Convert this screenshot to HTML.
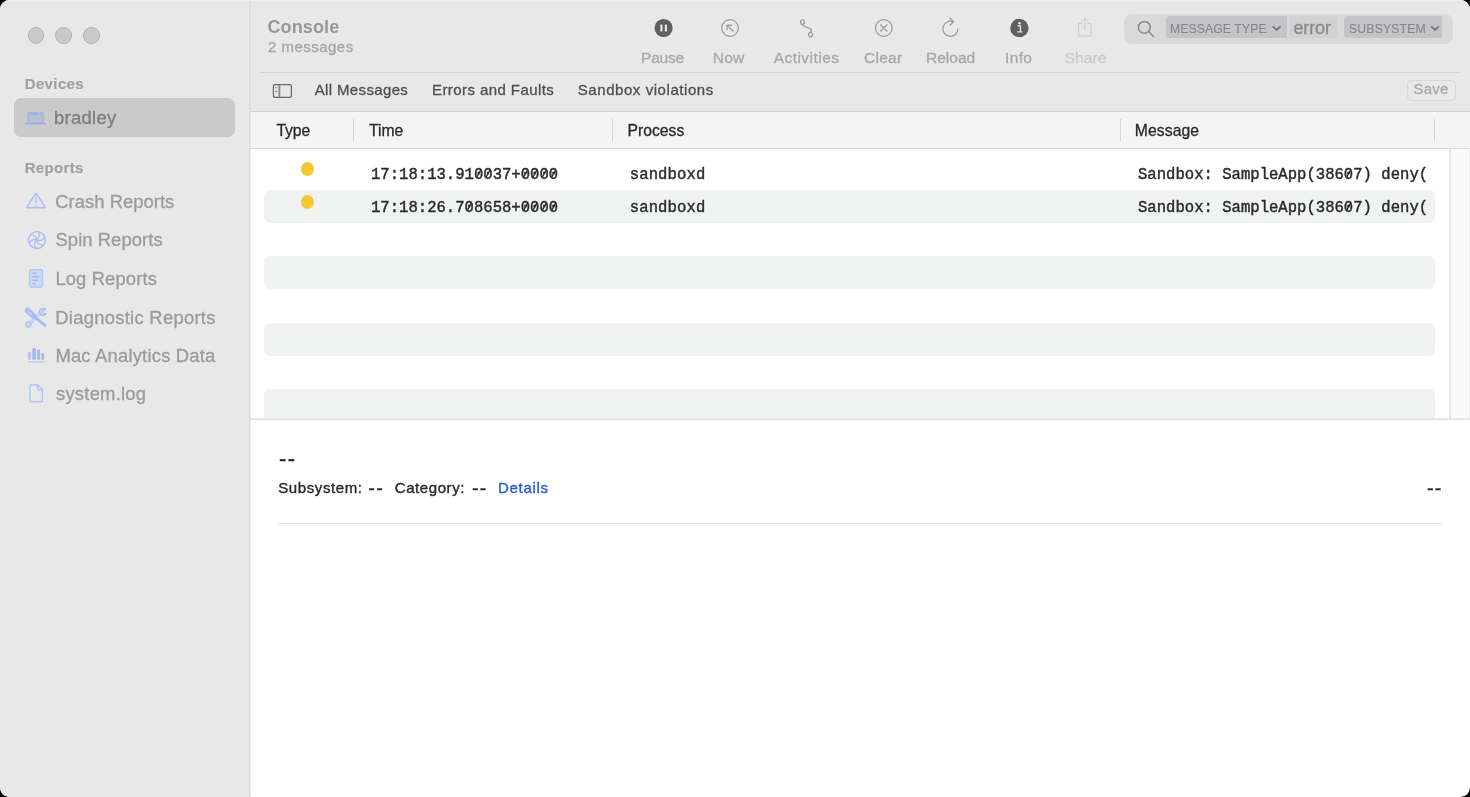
<!DOCTYPE html>
<html>
<head>
<meta charset="utf-8">
<title>Console</title>
<style>
*{box-sizing:border-box;margin:0;padding:0}
html,body{width:1470px;height:797px;overflow:hidden;background:#000;font-family:"Liberation Sans",sans-serif;}
#win{position:absolute;left:0;top:0;width:1470px;height:797px;border-radius:9.5px;overflow:hidden;background:#fff;will-change:transform;}
.abs{position:absolute}
.t{position:absolute;white-space:nowrap;line-height:1;transform-origin:0 50%;-webkit-text-stroke:.3px currentColor;}
/* sidebar */
#side{position:absolute;left:0;top:0;width:250px;height:797px;background:#e8e8e8;}
#sdiv{position:absolute;left:249px;top:0;width:2px;height:797px;background:linear-gradient(to right,#dbdbdb 50%,rgba(219,219,219,.45) 50%);}
#hl{position:absolute;left:0;top:0;width:1470px;height:1.2px;background:#eeeeee;}
.tl{position:absolute;top:27.4px;width:16.4px;height:16.4px;border-radius:50%;background:#c9c9c9;border:1.1px solid #b3b3b3;}
.sh{font-weight:bold;font-size:15px;color:#a1a1a1;-webkit-text-stroke:.15px currentColor;}
.si{font-size:18.4px;color:#9b9b9b;}
#sel{position:absolute;left:14px;top:98.2px;width:221.2px;height:38.4px;border-radius:7px;background:#cacaca;}
/* toolbar */
#tb{position:absolute;left:250px;top:0;width:1220px;height:111px;background:#e8e8e8;}
.lbl{font-size:15.5px;color:#a8a8a8;}
.flt{font-size:15px;color:#4f4f4f;}
/* table */
#hdr{position:absolute;left:250px;top:111px;width:1220px;height:38px;background:#f4f4f4;border-top:1px solid #d2d2d2;border-bottom:1px solid #d9d9d9;}
.hc{font-size:15.7px;color:#2a2a2a;}
.hs{position:absolute;top:119.2px;width:1px;height:21.6px;background:#d3d3d3;}
.row{position:absolute;left:264.3px;width:1170.5px;height:32.9px;border-radius:6px;background:#f1f3f3;}
.mono{font-family:"Liberation Mono",monospace;font-size:15.6px;color:#2b2b2b;-webkit-text-stroke:.42px currentColor;}
.tok{font-size:13.2px;color:#86868b;-webkit-text-stroke:.1px currentColor;transform:scaleX(.93);}
.dt{font-size:15px;color:#2a2a2a;-webkit-text-stroke:.38px currentColor;}
.dash{font-size:20px;color:#2a2a2a;letter-spacing:1.2px}
.dot{position:absolute;width:13.2px;height:13.2px;border-radius:50%;background:#f4c931;}
</style>
</head>
<body>
<div id="win">

<!-- SIDEBAR -->
<div id="side"></div>
<div class="tl" style="left:27.7px"></div>
<div class="tl" style="left:55.4px"></div>
<div class="tl" style="left:83.2px"></div>
<div class="t sh" style="left:24.7px;top:75.7px;letter-spacing:.38px">Devices</div>
<div id="sel"></div>
<div class="t si" style="left:54px;top:109px;color:#7d7d7d;letter-spacing:.3px">bradley</div>
<div class="t sh" style="left:24.7px;top:160.4px;letter-spacing:.33px">Reports</div>
<div class="t si" style="left:55.3px;top:193px;letter-spacing:.03px">Crash Reports</div>
<div class="t si" style="left:55.5px;top:231.3px;letter-spacing:.07px">Spin Reports</div>
<div class="t si" style="left:55.4px;top:270px;letter-spacing:.13px">Log Reports</div>
<div class="t si" style="left:55.3px;top:308.8px;letter-spacing:.28px">Diagnostic Reports</div>
<div class="t si" style="left:55.4px;top:346.8px;letter-spacing:.21px">Mac Analytics Data</div>
<div class="t si" style="left:56px;top:385px;letter-spacing:.24px">system.log</div>

<!-- sidebar icons -->
<svg class="abs" style="left:0;top:100px" width="250" height="320" viewBox="0 100 250 320" fill="none" stroke-linecap="round" stroke-linejoin="round">
 <!-- laptop -->
 <rect x="27.2" y="112" width="16.7" height="11" rx="1.6" fill="#a7b6de"/>
 <rect x="29.1" y="114.9" width="12.3" height="7.2" fill="#b7bfd6"/>
 <rect x="32.9" y="112.8" width="3.9" height="1.7" rx=".5" fill="#97abe0"/>
 <rect x="24.9" y="122.5" width="21.2" height="2.1" rx="1" fill="#9db1e3"/>
 <g stroke="#a6bcf4" stroke-width="1.4">
  <!-- crash: warning triangle -->
  <path d="M36 193.3 L45.5 207.6 H26.6 Z" stroke="#abc0f5" stroke-width="1.7"/>
  <path d="M36 197.6 V203 M36 205.3 V205.5" stroke="#abc0f5" stroke-width="1.35"/>
  <!-- spin -->
  <circle cx="36.95" cy="240.05" r="8.4"/>
  <g transform="translate(36.95 240.05)" stroke-width="1.2">
   <path d="M0 0 Q3.9 -3.4 1.4 -8.2"/>
   <path d="M0 0 Q3.9 -3.4 1.4 -8.2" transform="rotate(60)"/>
   <path d="M0 0 Q3.9 -3.4 1.4 -8.2" transform="rotate(120)"/>
   <path d="M0 0 Q3.9 -3.4 1.4 -8.2" transform="rotate(180)"/>
   <path d="M0 0 Q3.9 -3.4 1.4 -8.2" transform="rotate(240)"/>
   <path d="M0 0 Q3.9 -3.4 1.4 -8.2" transform="rotate(300)"/>
   <circle r="1.3" fill="#a6bcf4" stroke="none"/>
  </g>
  <!-- log doc -->
  <rect x="29.7" y="269.7" width="12.7" height="17.3" rx="2" fill="#cfdaf5" stroke="#b3c6f4" stroke-width="1.5"/>
  <path d="M32.4 273.3 H36.4 M32.4 276.8 H39.3 M32.4 280.3 H38 M32.4 283.8 H35.4" stroke="#a0b8f5" stroke-width="1.5" stroke-linecap="butt"/>
  <!-- diagnostic: wrench + screwdriver -->
  <path d="M29.4 323.6 L41 312.4" stroke="#bccdf6" stroke-width="3.4"/>
  <path d="M29.4 323.6 L41 312.4" stroke="#e1e5ef" stroke-width="1.2"/>
  <path d="M45.6 309.2 A3.7 3.7 0 1 0 46.4 313.6 L43.2 313.2 L42.6 310.8 Z" fill="#c3d2f6" stroke="#aac0f5" stroke-width="1.2"/>
  <circle cx="28.4" cy="324.4" r="2.7" fill="#c9d6f6" stroke="#b0c4f5" stroke-width="1.2"/>
  <path d="M27.6 310.4 L34 316.5" stroke="#a9bff4" stroke-width="5.8"/>
  <path d="M28.6 311.4 L32 314.6" stroke="#bdcdf5" stroke-width="2.6" stroke-linecap="butt"/>
  <path d="M34 316.5 L44.9 325.3" stroke="#a2baf5" stroke-width="2.7"/>
 </g>
 <!-- analytics bars -->
 <g fill="#a3baf5">
  <rect x="28.4" y="351.9" width="2.1" height="7.8" rx=".6"/>
  <rect x="32.3" y="348" width="3.6" height="11.7" rx=".8"/>
  <rect x="37.1" y="349.5" width="3" height="10.2" rx=".7"/>
  <rect x="41.3" y="352.9" width="2.8" height="6.8" rx=".6"/>
  <rect x="28" y="361.2" width="16.4" height="1.4" rx=".5" fill="#b3c6f5"/>
 </g>
 <!-- system.log doc -->
 <path d="M31.7 384.8 H37.6 L42.4 389.6 V399.9 Q42.4 401.7 40.6 401.7 H31.7 Q29.9 401.7 29.9 399.9 V386.6 Q29.9 384.8 31.7 384.8 Z M37.4 385 V388.2 Q37.4 389.8 39 389.8 H42.2" stroke="#b0c5f5" stroke-width="1.4"/>
</svg>

<!-- TOOLBAR -->
<div id="tb"></div>
<div class="t" style="left:267.5px;top:18px;font-weight:bold;font-size:18px;color:#989898;letter-spacing:.12px;-webkit-text-stroke:0">Console</div>
<div class="t" style="left:268px;top:38.5px;font-size:15px;color:#a6a6a6;letter-spacing:.48px">2 messages</div>
<div class="t lbl" style="left:641px;top:50.3px;letter-spacing:-.2px">Pause</div>
<div class="t lbl" style="left:712.8px;top:50.3px;letter-spacing:.25px">Now</div>
<div class="t lbl" style="left:773.7px;top:50.3px;letter-spacing:.46px">Activities</div>
<div class="t lbl" style="left:864px;top:50.3px;letter-spacing:.28px">Clear</div>
<div class="t lbl" style="left:926px;top:50.3px">Reload</div>
<div class="t lbl" style="left:1005px;top:50.3px;letter-spacing:.37px">Info</div>
<div class="t lbl" style="left:1064.5px;top:50.3px;color:#cbcbcb;letter-spacing:.12px">Share</div>
<div class="abs" style="left:260px;top:72px;width:1199px;height:1px;background:#d5d5d5"></div>
<div class="t flt" style="left:314.7px;top:82px;letter-spacing:.36px">All Messages</div>
<div class="t flt" style="left:432px;top:82px;letter-spacing:.42px">Errors and Faults</div>
<div class="t flt" style="left:577.8px;top:82px;letter-spacing:.56px">Sandbox violations</div>

<!-- search field -->
<div class="abs" style="left:1124px;top:14px;width:329px;height:30px;border-radius:8px;background:#d9d9d9"></div>
<div class="abs" style="left:1166px;top:16.4px;width:120.5px;height:22px;border-radius:4px 0 0 4px;background:#c3c3c8"></div>
<div class="abs" style="left:1289px;top:16.4px;width:48px;height:22px;border-radius:0 4px 4px 0;background:#d1d1d4"></div>
<div class="abs" style="left:1344px;top:16.4px;width:98px;height:22px;border-radius:4px 0 0 4px;background:#c3c3c8"></div>
<div class="t tok" style="left:1170.3px;top:21.7px;letter-spacing:.07px">MESSAGE TYPE</div>
<div class="t" style="left:1293.4px;top:19.2px;font-size:18px;color:#8a8a8a;letter-spacing:-.1px">error</div>
<div class="t tok" style="left:1348.6px;top:21.7px;letter-spacing:.15px">SUBSYSTEM</div>
<!-- save button -->
<div class="abs" style="left:1406.5px;top:80px;width:49px;height:21px;border-radius:4.5px;border:1px solid #d8d8d8;background:#e9e9e9"></div>
<div class="t" style="left:1413.6px;top:81px;font-size:15px;color:#aaa;letter-spacing:.2px">Save</div>

<!-- toolbar icons -->
<svg class="abs" style="left:0;top:0" width="1470" height="112" viewBox="0 0 1470 112" fill="none" stroke-linecap="round" stroke-linejoin="round">
 <!-- pause -->
 <circle cx="663.6" cy="28" r="9.1" fill="#5f5f5f"/>
 <rect x="660.3" y="24.6" width="2.2" height="6.9" rx=".5" fill="#e6e6e6"/>
 <rect x="664.8" y="24.6" width="2.2" height="6.9" rx=".5" fill="#e6e6e6"/>
 <!-- now -->
 <g stroke="#9a9a9a" stroke-width="1.25">
  <circle cx="730" cy="28" r="8.3"/>
  <path d="M733.3 31.3 L727.1 25.1 M727.1 29.7 V25.1 H731.7"/>
 <!-- activities -->
  <ellipse cx="802.5" cy="22.1" rx="1.9" ry="2.4" transform="rotate(-12 802.5 22.1)"/>
  <path d="M803 24.6 C803.6 27 805.8 27.2 807.8 27.6 C810.6 28.1 811.9 29.6 811.1 32.1"/>
  <ellipse cx="810.5" cy="34.6" rx="1.9" ry="2.4" transform="rotate(-12 810.5 34.6)"/>
 <!-- clear -->
  <circle cx="883.8" cy="28" r="8.3"/>
  <path d="M880.6 24.8 L887 31.2 M887 24.8 L880.6 31.2"/>
 <!-- reload -->
  <path d="M952.9 21.7 A7.5 7.5 0 1 0 957.9 28.9"/>
  <path d="M949.9 18.2 L953.7 21.6 L950.3 25"/>
 </g>
 <!-- info -->
 <circle cx="1019.4" cy="27.9" r="9.2" fill="#606060"/>
 <circle cx="1019.5" cy="23.3" r="1.25" fill="#e8e8e8"/>
 <path d="M1017.5 25.9 H1020.4 V31.7 M1017.2 31.9 H1022.4" stroke="#e8e8e8" stroke-width="1.3" stroke-linecap="butt" stroke-linejoin="miter"/>
 <!-- share -->
 <g stroke="#d0d0d0" stroke-width="1.2">
  <path d="M1082 23.4 H1079.6 Q1078.6 23.4 1078.6 24.4 V35.2 Q1078.6 36.2 1079.6 36.2 H1090 Q1091 36.2 1091 35.2 V24.4 Q1091 23.4 1090 23.4 H1087.6"/>
  <path d="M1084.8 30 V18.4 M1081.8 21.2 L1084.8 18.2 L1087.8 21.2"/>
 </g>
 <!-- search glass -->
 <g stroke="#8a8a8a" stroke-width="1.45">
  <circle cx="1144.3" cy="27.3" r="5.9"/>
  <path d="M1148.6 31.6 L1153.4 36.4"/>
 </g>
 <!-- token chevrons -->
 <g stroke="#707070" stroke-width="1.7">
  <path d="M1273.4 26.8 L1276.7 29.8 L1280 26.8"/>
  <path d="M1431.6 26.8 L1434.9 29.8 L1438.2 26.8"/>
 </g>
 <!-- sidebar toggle -->
 <g stroke="#666" stroke-width="1.2">
  <rect x="273.4" y="84.6" width="18" height="12.8" rx="1.9"/>
  <path d="M279.4 84.8 V97.2" stroke="#8a8a8a" stroke-width="1.9" stroke-linecap="butt"/>
  <path d="M275.5 87.8 H277 M275.5 91.4 H277" stroke="#8a8a8a" stroke-width="1.1"/>
 </g>
</svg>

<!-- TABLE HEADER -->
<div id="hdr"></div>
<div class="t hc" style="left:276.4px;top:123.4px;letter-spacing:-.1px">Type</div>
<div class="t hc" style="left:369px;top:123.4px;letter-spacing:-.02px">Time</div>
<div class="t hc" style="left:627.6px;top:123.4px;letter-spacing:0px">Process</div>
<div class="t hc" style="left:1134.8px;top:123.4px;letter-spacing:.1px">Message</div>
<div class="hs" style="left:353px"></div>
<div class="hs" style="left:612px"></div>
<div class="hs" style="left:1120px"></div>
<div class="hs" style="left:1434.2px"></div>

<!-- ROWS -->
<div class="row" style="top:190.1px"></div>
<div class="row" style="top:256.3px"></div>
<div class="row" style="top:322.8px"></div>
<div class="row" style="top:389.2px;height:30px;border-bottom-left-radius:0;border-bottom-right-radius:0"></div>
<div class="dot" style="left:300.8px;top:162.4px"></div>
<div class="dot" style="left:300.8px;top:195.4px"></div>
<div class="t mono" style="left:371px;top:168px">17:18:13.910037+0000</div>
<div class="t mono" style="left:371px;top:201.2px">17:18:26.708658+0000</div>
<div class="t mono" style="letter-spacing:.12px;left:629.7px;top:168px">sandboxd</div>
<div class="t mono" style="letter-spacing:.12px;left:629.7px;top:201.2px">sandboxd</div>
<div class="t mono" style="left:1138px;top:168px">Sandbox: SampleApp(38607) deny(</div>
<div class="t mono" style="left:1138px;top:201.2px">Sandbox: SampleApp(38607) deny(</div>
<!-- slashed zeros -->
<svg class="abs" style="left:0;top:150px" width="1470" height="80" viewBox="0 150 1470 80"><path d="M476.8 177.2 L480.6 170.2 M486.1 177.2 L489.9 170.2 M523.6 177.2 L527.4 170.2 M532.9 177.2 L536.7 170.2 M542.3 177.2 L546.1 170.2 M551.7 177.2 L555.5 170.2 M1346.7 177.2 L1350.5 170.2 M467.4 210.4 L471.2 203.4 M523.6 210.4 L527.4 203.4 M532.9 210.4 L536.7 203.4 M542.3 210.4 L546.1 203.4 M551.7 210.4 L555.5 203.4 M1346.7 210.4 L1350.5 203.4" stroke="#2b2b2b" stroke-width="1.35" stroke-linecap="round" fill="none"/></svg>
<!-- scrollbar track -->
<div class="abs" style="left:1449px;top:149px;width:21px;height:270px;background:#fafafa;border-left:2px solid #e7e7e7;border-right:1px solid #f0f0f0"></div>
<div class="abs" style="left:250px;top:418px;width:1220px;height:2px;background:linear-gradient(#e9e9e9 50%,#e0e0e0 50%)"></div>

<div id="sdiv"></div>
<div id="hl"></div>

<!-- DETAIL -->
<div class="t dash" style="left:279.1px;top:448.2px;font-size:22px;letter-spacing:1.4px;-webkit-text-stroke:.4px currentColor">--</div>
<div class="t dt" style="left:278.2px;top:479.8px;letter-spacing:.6px">Subsystem:</div>
<div class="t dash" style="left:368.3px;top:477.5px">--</div>
<div class="t dt" style="left:394.8px;top:479.8px;letter-spacing:.57px">Category:</div>
<div class="t dash" style="left:472px;top:477.5px">--</div>
<div class="t dt" style="left:498px;top:479.8px;color:#2b5cd9;letter-spacing:.68px">Details</div>
<div class="t dash" style="left:1427px;top:477.5px">--</div>
<div class="abs" style="left:278px;top:522.5px;width:1164px;height:1.2px;background:#dedede"></div>

</div>
</body>
</html>
